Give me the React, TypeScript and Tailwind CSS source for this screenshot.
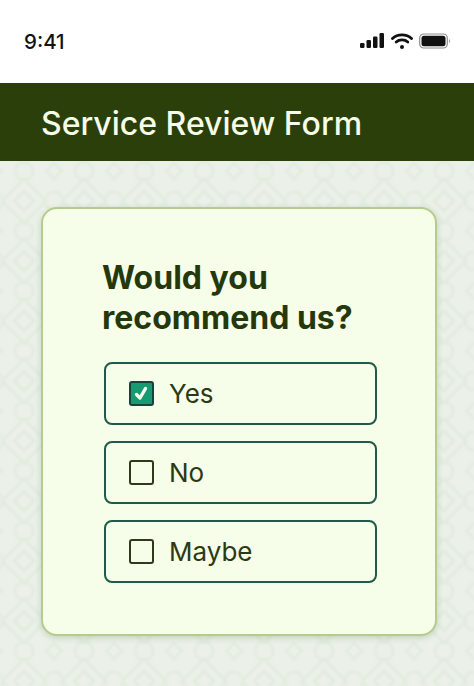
import React from "react";

function Pattern() {
  return (
    <svg className="absolute inset-0 h-full w-full blur-[0.8px]" aria-hidden="true">
      <defs>
        <pattern id="bgp" x="-6" y="10" width="60" height="60" patternUnits="userSpaceOnUse">
          <g fill="none" stroke="#e2eadf" strokeWidth="2.5">
            <path d="M30 8 L52 30 L30 52 L8 30 Z" />
            <path d="M30 20 L40 30 L30 40 L20 30 Z" />
            <path d="M0 -8 L8 0 L0 8 L-8 0 Z M60 -8 L68 0 L60 8 L52 0 Z M0 52 L8 60 L0 68 L-8 60 Z M60 52 L68 60 L60 68 L52 60 Z" />
            <circle cx="30" cy="0" r="9" />
            <circle cx="30" cy="60" r="9" />
            <circle cx="0" cy="30" r="9" />
            <circle cx="60" cy="30" r="9" />
          </g>
        </pattern>
      </defs>
      <rect width="100%" height="100%" fill="url(#bgp)" />
    </svg>
  );
}

function Option({ label, checked }: { label: string; checked?: boolean }) {
  return (
    <div className="flex h-[63px] items-center gap-[15px] rounded-[8px] border-2 border-[#1f5a4c] pl-[23px]">
      {checked ? (
        <span className="flex h-[25px] w-[25px] items-center justify-center rounded-[3px] border-2 border-[#14453a] bg-[#159a72]">
          <svg width="19" height="19" viewBox="0 0 19 19" fill="none">
            <path d="M4.5 10.5 L8 14 L13.5 4.5" stroke="#f4fdea" strokeWidth="3.4" strokeLinecap="round" strokeLinejoin="round" />
          </svg>
        </span>
      ) : (
        <span className="h-[25px] w-[25px] rounded-[3px] border-2 border-[#2f3a1c]" />
      )}
      <span className="text-[26px] leading-none text-[#2b3a12]">{label}</span>
    </div>
  );
}

export default function App() {
  return (
    <div className="flex h-[686px] w-[474px] flex-col overflow-hidden bg-white font-['Inter',sans-serif]">
      <div className="flex h-[83px] items-start justify-between pl-[24px] pr-[23px] pt-[29px]">
        <span className="text-[20.5px] font-medium leading-[26px] text-[#111111]">9:41</span>
        <div className="flex items-center gap-[6px] pt-[4px]">
          <svg width="25" height="16" viewBox="0 0 25 16" fill="#111111">
            <rect x="0" y="10" width="4.5" height="5" rx="1.2" />
            <rect x="6.5" y="7" width="4.5" height="8" rx="1.2" />
            <rect x="13" y="3.5" width="4.5" height="11.5" rx="1.2" />
            <rect x="19.5" y="0" width="4.5" height="15" rx="1.2" />
          </svg>
          <svg width="22" height="16" viewBox="0 0 22 16" fill="none" stroke="#111111" strokeWidth="2.8" strokeLinecap="round">
            <path d="M1.5 5.5 C6.5 0.6 15.5 0.6 20.5 5.5" />
            <path d="M5.2 9 C8.2 6.2 13.8 6.2 16.8 9" />
            <path d="M11 14 L11 14" strokeWidth="4" />
          </svg>
          <svg width="32" height="16" viewBox="0 0 32 16" fill="none">
            <rect x="0.7" y="1" width="27.6" height="14" rx="4" stroke="#8d8d8d" strokeWidth="1.2" />
            <rect x="2.5" y="2.8" width="24" height="10.4" rx="2.5" fill="#111111" />
            <path d="M30 6 C31.2 6.4 31.2 9.6 30 10 Z" fill="#8d8d8d" />
          </svg>
        </div>
      </div>
      <div className="flex h-[78px] items-center bg-[#2b3f0a] pl-[41px] pt-[3px]">
        <h1 className="text-[32px] font-medium leading-none text-[#f6fde8]">Service Review Form</h1>
      </div>
      <div className="relative flex-1 overflow-hidden bg-[#ebf1e9] pl-[41px] pr-[37px] pt-[46px]">
        <Pattern />
        <div className="relative flex h-[429px] flex-col rounded-[16px] border-2 border-[#b4cc8c] bg-[#f6fde8] pl-[61px] pr-[58px] pt-[49px] shadow-[0_2px_6px_rgba(60,80,40,0.2)]">
          <h2 className="-ml-[2px] whitespace-nowrap text-[32px] font-bold leading-[40px] text-[#24380a]">
            Would you
            <br />
            recommend us?
          </h2>
          <div className="mt-[24px] flex flex-col gap-[16px]">
            <Option label="Yes" checked />
            <Option label="No" />
            <Option label="Maybe" />
          </div>
        </div>
      </div>
    </div>
  );
}
